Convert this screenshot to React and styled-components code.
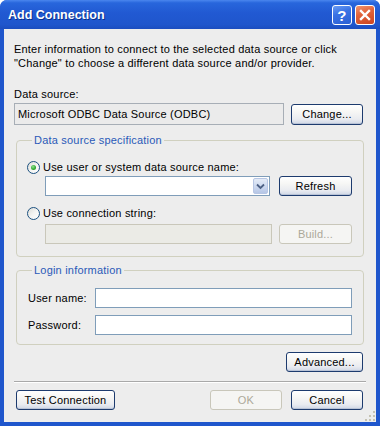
import styled, { createGlobalStyle } from "styled-components";

const GlobalStyle = createGlobalStyle`
  html, body { margin: 0; padding: 0; background: #ffffff; }
  body {
    font-family: "Liberation Sans", Arial, sans-serif;
    font-size: 11px;
    letter-spacing: 0.2px;
    color: #000;
  }
  * { box-sizing: border-box; }
`;

const Window = styled.div`
  width: 380px;
  height: 426px;
  display: flex;
  flex-direction: column;
  border-radius: 7px 7px 0 0;
  overflow: hidden;
  background: #1f56cc;
`;

const TitleBar = styled.div`
  height: 29px;
  flex: none;
  display: flex;
  align-items: center;
  padding: 1px 5px 0 8px;
  background: linear-gradient(180deg, #4a86ee 0%, #2866dc 10%, #2159d2 45%, #1f56cc 85%, #1b4dbf 100%);
`;

const Title = styled.div`
  flex: 1;
  color: #fff;
  font-weight: bold;
  font-size: 12.5px;
  letter-spacing: 0;
  text-shadow: 1px 1px 0 #0b2f8a;
`;

const CapButton = styled.div`
  width: 20px;
  height: 20px;
  margin-left: 3px;
  border: 1px solid #fff;
  border-radius: 3px;
  display: flex;
  align-items: center;
  justify-content: center;
  color: #fff;
  font-weight: bold;
  font-size: 15px;
  background: ${({ $close }) =>
    $close
      ? "linear-gradient(160deg, #f2956f 0%, #e2643c 40%, #cc4520 100%)"
      : "linear-gradient(160deg, #6a9cf4 0%, #3a72e4 40%, #2a5fd4 100%)"};
`;

const Frame = styled.div`
  flex: 1;
  display: flex;
  flex-direction: column;
  margin: 0 4px 4px 4px;
  padding: 13px 13px 0 10px;
  background: #ededed;
  position: relative;
`;

const Intro = styled.p`
  margin: 0;
  line-height: 14px;
`;

const Label = styled.div`
  line-height: 14px;
  margin-top: ${({ $mt }) => $mt ?? 0}px;
`;

const Row = styled.div`
  display: flex;
  align-items: center;
  gap: ${({ $gap }) => $gap ?? 7}px;
  margin-top: ${({ $mt }) => $mt ?? 0}px;
  padding-left: ${({ $indent }) => $indent ?? 0}px;
`;

const TextBox = styled.div`
  flex: ${({ $w }) => ($w ? "none" : 1)};
  width: ${({ $w }) => ($w ? `${$w}px` : "auto")};
  height: ${({ $h }) => $h ?? 20}px;
  display: flex;
  align-items: center;
  padding: 0 3px;
  border: 1px solid ${({ $variant }) =>
    $variant === "disabled" ? "#c9c7ba" : $variant === "readonly" ? "#a7aeb6" : "#7f9db9"};
  background: ${({ $variant }) =>
    $variant === "disabled" ? "#ebebe6" : $variant === "readonly" ? "#ebebeb" : "#fff"};
`;

const Combo = styled.div`
  width: ${({ $w }) => $w}px;
  height: 20px;
  display: flex;
  justify-content: flex-end;
  padding: 1px;
  border: 1px solid #7f9db9;
  background: #fff;
`;

const DropButton = styled.div`
  width: 15px;
  display: flex;
  align-items: center;
  justify-content: center;
  border-radius: 2px;
  background: linear-gradient(180deg, #e4ebf7 0%, #c9d6ee 60%, #b6c6e6 100%);
  border: 1px solid #b7c6e4;
`;

const Button = styled.div`
  width: ${({ $w }) => $w}px;
  height: ${({ $h }) => $h ?? 21}px;
  flex: none;
  display: flex;
  align-items: center;
  justify-content: center;
  margin-left: ${({ $ml }) => $ml ?? 0}px;
  border-radius: 3px;
  border: 1px solid ${({ $disabled }) => ($disabled ? "#c9c7ba" : "#1d3b6e")};
  color: ${({ $disabled }) => ($disabled ? "#aca899" : "#000")};
  background: ${({ $disabled }) =>
    $disabled
      ? "#f5f5f3"
      : "linear-gradient(180deg, #ffffff 0%, #f7f7f5 35%, #e9ebf0 75%, #cfd7e6 100%)"};
  box-shadow: ${({ $disabled }) => ($disabled ? "none" : "inset 0 -1px 0 #b9c3d6")};
`;

const Group = styled.fieldset`
  margin: ${({ $mt }) => $mt ?? 0}px -1px 0 2px;
  padding: ${({ $pad }) => $pad};
  border: 1px solid #d0d0bf;
  border-radius: 4px;
  min-width: 0;
`;

const Legend = styled.legend`
  margin-left: 5px;
  padding: 0 2px;
  line-height: 14px;
  color: #2a5ab8;
`;

const RadioLabel = styled.div`
  display: flex;
  align-items: center;
  gap: 3px;
  height: 14px;
  margin-top: ${({ $mt }) => $mt ?? 0}px;
`;

const RadioDot = styled.span`
  width: 13px;
  height: 13px;
  flex: none;
  border-radius: 50%;
  border: 1px solid #1c5180;
  background: linear-gradient(135deg, #dcdcd7 0%, #f4f4f2 50%, #ffffff 100%);
  display: flex;
  align-items: center;
  justify-content: center;
  &::after {
    content: "";
    display: ${({ $on }) => ($on ? "block" : "none")};
    width: 5px;
    height: 5px;
    border-radius: 50%;
    background: radial-gradient(circle at 40% 35%, #8fe28f 0%, #2fa82f 60%, #1f8c1f 100%);
  }
`;

const FieldLabel = styled.div`
  width: 68px;
  flex: none;
  padding-left: 1px;
`;

const Spacer = styled.div`
  flex: 1;
`;

const Separator = styled.div`
  margin: 9px -3px 0 0;
  height: 2px;
  border-top: 1px solid #a9a9a9;
  border-bottom: 1px solid #ffffff;
`;

const Grip = styled.svg`
  position: absolute;
  right: 1px;
  bottom: 1px;
`;

function Radio({ on, children, mt }) {
  return (
    <RadioLabel $mt={mt}>
      <RadioDot $on={on} />
      <span>{children}</span>
    </RadioLabel>
  );
}

export default function App() {
  return (
    <>
      <GlobalStyle />
      <Window>
        <TitleBar>
          <Title>Add Connection</Title>
          <CapButton>?</CapButton>
          <CapButton $close>
            <svg width="12" height="12" viewBox="0 0 12 12">
              <path d="M2 2 L10 10 M10 2 L2 10" stroke="#fff" strokeWidth="2.4" strokeLinecap="square" />
            </svg>
          </CapButton>
        </TitleBar>
        <Frame>
          <Intro>
            Enter information to connect to the selected data source or click
            <br />
            "Change" to choose a different data source and/or provider.
          </Intro>
          <Label $mt={17}>Data source:</Label>
          <Row $mt={2}>
            <TextBox $variant="readonly" $h={22}>Microsoft ODBC Data Source (ODBC)</TextBox>
            <Button $w={72}>Change...</Button>
          </Row>

          <Group $mt={8} $pad="13px 11px 12px 10px">
            <Legend>Data source specification</Legend>
            <Radio on>Use user or system data source name:</Radio>
            <Row $mt={2} $indent={18} $gap={9}>
              <Combo $w={225}>
                <DropButton>
                  <svg width="9" height="7" viewBox="0 0 9 7">
                    <path d="M1 1.5 L4.5 5 L8 1.5" fill="none" stroke="#4d6185" strokeWidth="1.8" />
                  </svg>
                </DropButton>
              </Combo>
              <Button $w={73} $h={20}>Refresh</Button>
            </Row>
            <Radio mt={10}>Use connection string:</Radio>
            <Row $mt={4} $indent={18} $gap={7}>
              <TextBox $variant="disabled" $w={227} />
              <Button $w={73} $h={20} $disabled>Build...</Button>
            </Row>
          </Group>

          <Group $mt={6} $pad="11px 11px 9px 10px">
            <Legend>Login information</Legend>
            <Row $gap={0}>
              <FieldLabel>User name:</FieldLabel>
              <TextBox />
            </Row>
            <Row $gap={0} $mt={7}>
              <FieldLabel>Password:</FieldLabel>
              <TextBox />
            </Row>
          </Group>

          <Row $mt={7}>
            <Spacer />
            <Button $w={77} $h={20}>Advanced...</Button>
          </Row>
          <Separator />
          <Row $mt={7} $gap={9}>
            <Button $w={99} $h={20} $ml={2}>Test Connection</Button>
            <Spacer />
            <Button $w={72} $h={20} $disabled>OK</Button>
            <Button $w={72} $h={20}>Cancel</Button>
          </Row>
          <Grip width="11" height="11" viewBox="0 0 11 11">
            {[[9, 1], [9, 5], [5, 5], [9, 9], [5, 9], [1, 9]].map(([x, y]) => (
              <rect key={`${x}-${y}`} x={x} y={y} width="2" height="2" fill="#c5c2b2" />
            ))}
          </Grip>
        </Frame>
      </Window>
    </>
  );
}
